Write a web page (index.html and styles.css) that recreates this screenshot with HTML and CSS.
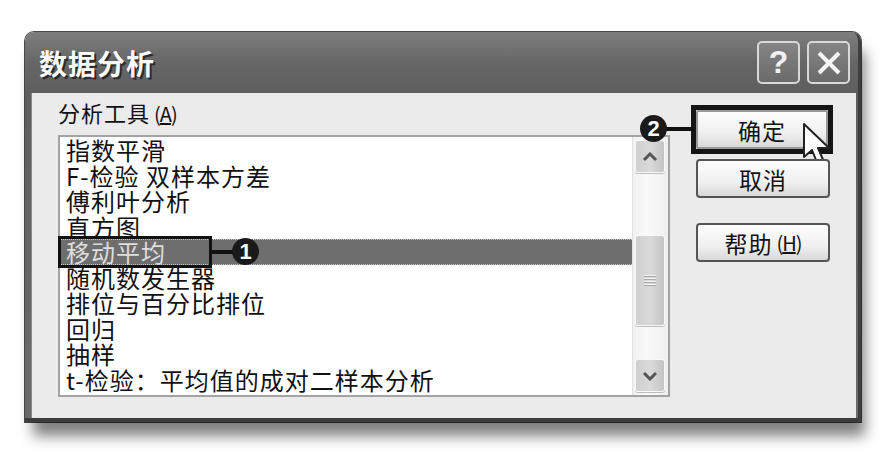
FILE: index.html
```html
<!DOCTYPE html>
<html lang="zh">
<head>
<meta charset="utf-8">
<title>数据分析</title>
<link rel="stylesheet" href="styles.css">
</head>
<body>
<div class="window">
  <div class="titlebar">
    <div class="title">数据分析</div>
    <div class="tbtns">
      <div class="tbtn">?</div>
      <div class="tbtn">
        <svg width="30" height="30" viewBox="0 0 30 30"><path d="M5 5 L25 25 M25 5 L5 25" stroke="#f4f4f4" stroke-width="4" fill="none"/></svg>
      </div>
    </div>
  </div>
  <div class="client">
    <div class="left">
      <div class="label">分析工具<span class="acc">(<u>A</u>)</span></div>
      <div class="listbox">
        <div class="items">
          <div class="item">指数平滑</div>
          <div class="item">F-检验 双样本方差</div>
          <div class="item">傅利叶分析</div>
          <div class="item">直方图</div>
          <div class="item sel">移动平均
            <span class="mark-box"></span>
            <span class="mark-line"></span>
            <span class="badge badge-1">1</span>
          </div>
          <div class="item">随机数发生器</div>
          <div class="item">排位与百分比排位</div>
          <div class="item">回归</div>
          <div class="item">抽样</div>
          <div class="item">t-检验：平均值的成对二样本分析</div>
        </div>
        <div class="scrollbar">
          <div class="sbtn">
            <svg width="16" height="10" viewBox="0 0 16 10"><path d="M2 8 L8 2 L14 8" stroke="#555" stroke-width="3" fill="none"/></svg>
          </div>
          <div class="thumb">
            <span class="grip"></span>
          </div>
          <div class="sbtn">
            <svg width="16" height="10" viewBox="0 0 16 10"><path d="M2 2 L8 8 L14 2" stroke="#555" stroke-width="3" fill="none"/></svg>
          </div>
        </div>
      </div>
    </div>
    <div class="right">
      <div class="btn ok">确定
        <span class="mark-box2"></span>
        <span class="mark-line2"></span>
        <span class="badge badge-2">2</span>
        <svg class="cursor" width="34" height="50" viewBox="0 0 34 50"><path d="M1 1 L1 34 L9 27 L15 42 L21 39 L15 25 L26 25 Z" fill="#fff" stroke="#222" stroke-width="2" stroke-linejoin="round"/></svg>
      </div>
      <div class="btn">取消</div>
      <div class="btn help">帮助<span class="acc">(<u>H</u>)</span></div>
    </div>
  </div>
</div>
</body>
</html>
```

FILE: styles.css
```css
html, body {
  margin: 0;
  padding: 0;
  background: #fff;
}
body {
  padding: 32px 0 0 25px;
  height: 454px;
  box-sizing: border-box;
  font-family: "Noto Sans CJK SC", "Noto Sans", sans-serif;
}
.window {
  width: 836px;
  height: 390px;
  display: flex;
  flex-direction: column;
  background: linear-gradient(#7e7e7e, #666 8%, #5e5e5e 16%, #6a6a6a);
  border-radius: 9px 9px 0 0;
  box-shadow: 6px 16px 14px -2px rgba(0,0,0,0.5), 0 0 0 1px #4a4a4a;
  border-bottom: 4px solid #3c3c3c;
  border-right: 3px solid #3e3e3e;
  box-sizing: border-box;
}
.titlebar {
  height: 61px;
  flex: none;
  display: flex;
  align-items: center;
  justify-content: space-between;
  padding: 0 8px 0 14px;
}
.title {
  color: #fafafa;
  font-size: 28px;
  font-weight: 700;
  letter-spacing: 1px;
  text-shadow: 2px 2px 0 #2a2a2a;
}
.tbtns {
  display: flex;
  gap: 7px;
}
.tbtn {
  width: 43px;
  height: 43px;
  box-sizing: border-box;
  border: 2px solid #d8d8d8;
  border-radius: 5px;
  background: linear-gradient(#858585, #6a6a6a);
  color: #f0f0f0;
  font-family: "Liberation Sans", sans-serif;
  font-weight: 700;
  font-size: 32px;
  display: flex;
  align-items: center;
  justify-content: center;
}
.client {
  flex: 1;
  margin: 0 2px 0 6px;
  background: #ebebeb;
  border-left: 1px solid #8a8a8a;
  display: flex;
}
.left {
  padding-left: 26px;
  display: flex;
  flex-direction: column;
}
.label {
  height: 42px;
  line-height: 38px;
  font-size: 22px;
  color: #111;
  letter-spacing: 1px;
}
.acc {
  font-size: 20px;
  margin-left: 4px;
  letter-spacing: -1px;
}
.listbox {
  width: 612px;
  height: 262px;
  box-sizing: border-box;
  border: 2px solid #a3a3a3;
  background: #fff;
  display: flex;
}
.items {
  flex: 1;
}
.item {
  position: relative;
  height: 25.5px;
  line-height: 25.5px;
  font-size: 24px;
  padding-left: 6px;
  color: #111;
  white-space: nowrap;
  letter-spacing: 1px;
}
.item.sel {
  background: #6e6e6e;
  color: #dedede;
  box-sizing: border-box;
  border-top: 1px dotted #c8c8c8;
  border-bottom: 1px dotted #c8c8c8;
  line-height: 23px;
}
.mark-box {
  position: absolute;
  left: -2px;
  top: -4px;
  width: 154px;
  height: 32px;
  box-sizing: border-box;
  border: 3px solid #111;
}
.mark-line {
  position: absolute;
  left: 152px;
  top: 10px;
  width: 22px;
  height: 4px;
  background: #111;
}
.badge {
  position: absolute;
  width: 27px;
  height: 27px;
  border-radius: 50%;
  background: #1a1a1a;
  color: #fff;
  font-family: "Liberation Sans", sans-serif;
  font-weight: 700;
  font-size: 22px;
  line-height: 27px;
  text-align: center;
  letter-spacing: 0;
}
.badge-1 {
  left: 172px;
  top: -2px;
}
.scrollbar {
  width: 36px;
  flex: none;
  background: linear-gradient(90deg, #f0f0f0, #fafafa 40%, #eeeeee);
  border-left: 1px solid #e2e2e2;
  box-sizing: border-box;
  padding: 3px 3px 3px 2px;
  display: flex;
  flex-direction: column;
}
.sbtn, .thumb {
  box-sizing: border-box;
  border: 1px solid #f8f8f8;
  border-radius: 3px;
  background: linear-gradient(90deg, #cfcfcf, #dadada 50%, #c4c4c4);
  box-shadow: 0 1px 0 #bdbdbd;
  display: flex;
  align-items: center;
  justify-content: center;
}
.sbtn {
  height: 33px;
}
.thumb {
  height: 91px;
  margin-top: 62px;
  margin-bottom: auto;
}
.grip {
  width: 12px;
  height: 11px;
  background: repeating-linear-gradient(#f4f4f4 0 1px, #a8a8a8 1px 2px, transparent 2px 3px);
}
.right {
  padding-left: 26px;
  padding-top: 17px;
  display: flex;
  flex-direction: column;
}
.btn {
  position: relative;
  width: 134px;
  height: 39px;
  box-sizing: border-box;
  border: 2px solid #555;
  border-radius: 4px;
  background: linear-gradient(#fdfdfd, #f0f0f0 60%, #d8d8d8);
  font-size: 23px;
  color: #111;
  display: flex;
  align-items: center;
  justify-content: center;
  letter-spacing: 1px;
}
.btn + .btn {
  margin-top: 10px;
}
.btn.help {
  margin-top: 25px;
}
.ok {
  border-color: #999;
  border-radius: 2px;
  width: 132px;
}
.mark-box2 {
  position: absolute;
  left: -7px;
  top: -7px;
  right: -7px;
  bottom: -7px;
  border: 5px solid #151515;
}
.mark-line2 {
  position: absolute;
  left: -33px;
  top: 15px;
  width: 28px;
  height: 4px;
  background: #111;
}
.badge-2 {
  left: -58px;
  top: 3px;
}
.cursor {
  position: absolute;
  left: 105px;
  top: 11px;
}
```
